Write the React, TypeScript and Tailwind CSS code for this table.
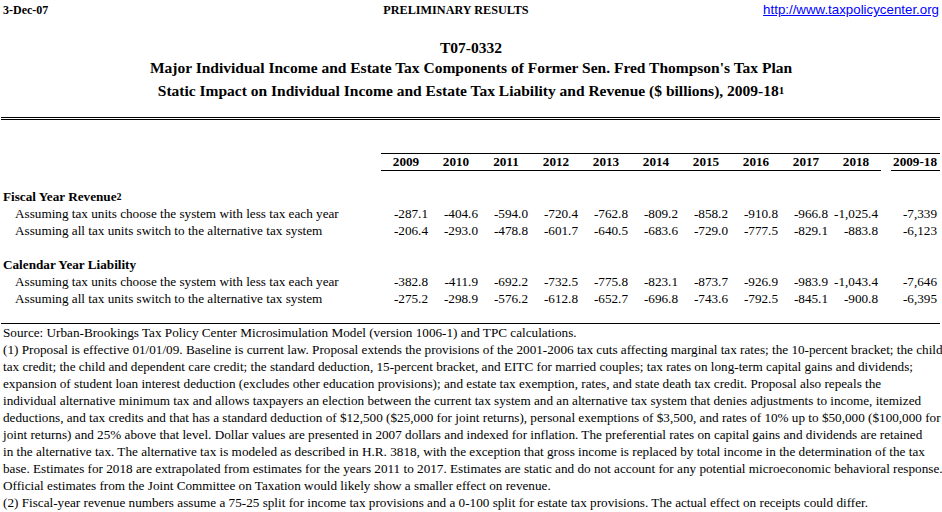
const years = ["2009", "2010", "2011", "2012", "2013", "2014", "2015", "2016", "2017", "2018"];

const sections = [
  {
    title: "Fiscal Year Revenue",
    note: "2",
    rows: [
      {
        label: "Assuming tax units choose the system with less tax each year",
        values: ["-287.1", "-404.6", "-594.0", "-720.4", "-762.8", "-809.2", "-858.2", "-910.8", "-966.8", "-1,025.4"],
        total: "-7,339",
      },
      {
        label: "Assuming all tax units switch to the alternative tax system",
        values: ["-206.4", "-293.0", "-478.8", "-601.7", "-640.5", "-683.6", "-729.0", "-777.5", "-829.1", "-883.8"],
        total: "-6,123",
      },
    ],
  },
  {
    title: "Calendar Year Liability",
    note: "",
    rows: [
      {
        label: "Assuming tax units choose the system with less tax each year",
        values: ["-382.8", "-411.9", "-692.2", "-732.5", "-775.8", "-823.1", "-873.7", "-926.9", "-983.9", "-1,043.4"],
        total: "-7,646",
      },
      {
        label: "Assuming all tax units switch to the alternative tax system",
        values: ["-275.2", "-298.9", "-576.2", "-612.8", "-652.7", "-696.8", "-743.6", "-792.5", "-845.1", "-900.8"],
        total: "-6,395",
      },
    ],
  },
];

const notes = [
  "Source: Urban-Brookings Tax Policy Center Microsimulation Model (version 1006-1) and TPC calculations.",
  "(1) Proposal is effective 01/01/09. Baseline is current law. Proposal extends the provisions of the 2001-2006 tax cuts affecting marginal tax rates; the 10-percent bracket; the child",
  "tax credit; the child and dependent care credit; the standard deduction, 15-percent bracket, and EITC for married couples; tax rates on long-term capital gains and dividends;",
  "expansion of student loan interest deduction (excludes other education provisions); and estate tax exemption, rates, and state death tax credit. Proposal also repeals the",
  "individual alternative minimum tax and allows taxpayers an election between the current tax system and an alternative tax system that denies adjustments to income, itemized",
  "deductions, and tax credits and that has a standard deduction of $12,500 ($25,000 for joint returns), personal exemptions of $3,500, and rates of 10% up to $50,000 ($100,000 for",
  "joint returns) and 25% above that level. Dollar values are presented in 2007 dollars and indexed for inflation. The preferential rates on capital gains and dividends are retained",
  "in the alternative tax. The alternative tax is modeled as described in H.R. 3818, with the exception that gross income is replaced by total income in the determination of the tax",
  "base. Estimates for 2018 are extrapolated from estimates for the years 2011 to 2017. Estimates are static and do not account for any potential microeconomic behavioral response.",
  "Official estimates from the Joint Committee on Taxation would likely show a smaller effect on revenue.",
  "(2) Fiscal-year revenue numbers assume a 75-25 split for income tax provisions and a 0-100 split for estate tax provisions. The actual effect on receipts could differ.",
];

const grid = "grid grid-cols-[381px_repeat(10,50px)_10px_49px] h-[17px] items-center";

function DataRow({ label, values, total }: { label: string; values: string[]; total: string }) {
  return (
    <div className={grid}>
      <div className="pl-[15px] whitespace-nowrap">{label}</div>
      {values.map((v, i) => (
        <div key={i} className="text-right pr-[3px]">
          {v}
        </div>
      ))}
      <div />
      <div className="text-right pr-[3px]">{total}</div>
    </div>
  );
}

export default function App() {
  return (
    <div className="w-[942px] h-[512px] overflow-hidden bg-white text-black font-['Liberation_Serif',serif] text-[13.2px] leading-none">
      {/* top bar */}
      <div className="flex items-center h-[20px] pl-[3px] pr-[3px]">
        <span className="font-bold text-[12px] w-[297px]">3-Dec-07</span>
        <span className="font-bold text-[12.2px] w-[312px] text-center">PRELIMINARY RESULTS</span>
        <span className="flex-1 text-right font-['Liberation_Sans',sans-serif] text-[13.3px] text-[#0000ff] underline">
          http://www.taxpolicycenter.org
        </span>
      </div>

      {/* titles */}
      <div className="mt-[17px] text-center font-bold text-[15.5px]">
        <div className="h-[21px] flex items-center justify-center">T07-0332</div>
        <div className="h-[20px] flex items-center justify-center">
          Major Individual Income and Estate Tax Components of Former Sen. Fred Thompson's Tax Plan
        </div>
        <div className="h-[26px] flex items-center justify-center">
          <span>
            Static Impact on Individual Income and Estate Tax Liability and Revenue ($ billions), 2009-18
            <sup className="text-[11px] relative -top-[2px]">1</sup>
          </span>
        </div>
      </div>

      <div className="mt-[13px] ml-px w-[939px] h-[3px] border-y border-black" />

      {/* header row */}
      <div className="mt-[33px] grid grid-cols-[381px_repeat(10,50px)_10px_49px]">
        <div />
        <div className="col-span-12 border-t border-black" />
      </div>
      <div className="grid grid-cols-[381px_repeat(10,50px)_10px_49px] h-[17px] font-bold">
        <div />
        {years.map((y) => (
          <div key={y} className="text-center border-b border-black flex items-center justify-center">
            {y}
          </div>
        ))}
        <div />
        <div className="border-b border-black flex items-center justify-end pr-[3px]">2009-18</div>
      </div>

      <div className="h-[17px]" />

      {sections.map((s, si) => (
        <div key={s.title}>
          {si > 0 && <div className="h-[17px]" />}
          <div className={grid}>
            <div className="pl-[3px] font-bold whitespace-nowrap">
              {s.title}
              {s.note && <sup className="text-[10px] relative -top-[1px]">{s.note}</sup>}
            </div>
          </div>
          {s.rows.map((r) => (
            <DataRow key={r.label} {...r} />
          ))}
        </div>
      ))}

      <div className="h-[16px]" />
      <div className="ml-px w-[939px] border-t border-black" />

      {/* notes */}
      <div className="pl-[3px]">
        {notes.map((n) => (
          <div key={n} className="h-[17px] flex items-center whitespace-nowrap">
            {n}
          </div>
        ))}
      </div>
    </div>
  );
}
